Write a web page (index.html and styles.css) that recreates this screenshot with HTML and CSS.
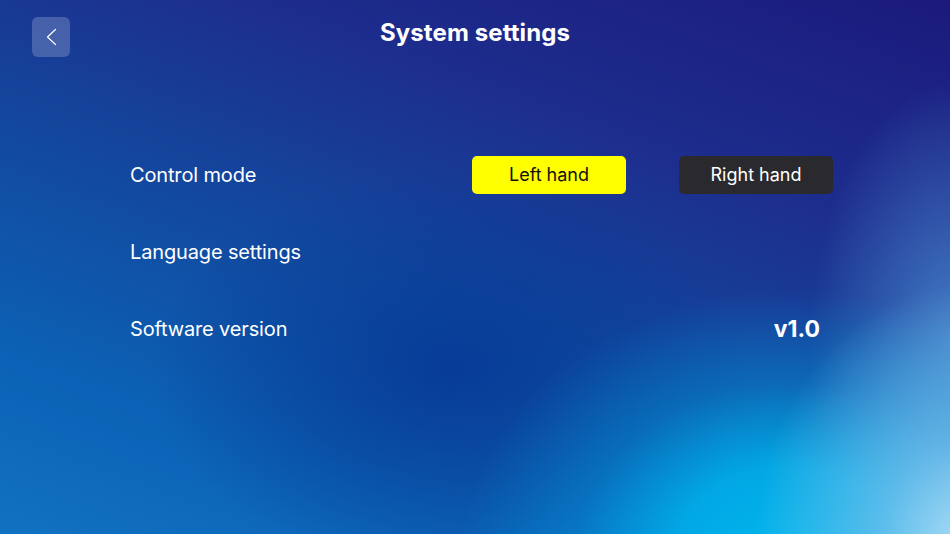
FILE: index.html
```html
<!DOCTYPE html>
<html>
<head>
<meta charset="utf-8">
<link rel="stylesheet" href="styles.css">
</head>
<body>
<div class="screen">
  <header class="topbar">
    <button class="back" aria-label="Back">
      <svg width="14" height="18" viewBox="0 0 14 18"><path d="M11.5 1.5 L3.5 9 L11.5 16.5" fill="none" stroke="#fff" stroke-width="1.2" stroke-linecap="round" stroke-linejoin="round"/></svg>
    </button>
    <h1 class="title">System settings</h1>
    <div class="spacer"></div>
  </header>
  <main class="list">
    <div class="row">
      <span class="label">Control mode</span>
      <div class="choices">
        <button class="choice active">Left hand</button>
        <button class="choice">Right hand</button>
      </div>
    </div>
    <div class="row">
      <span class="label">Language settings</span>
    </div>
    <div class="row">
      <span class="label">Software version</span>
      <span class="version">v1.0</span>
    </div>
  </main>
</div>
</body>
</html>
```
FILE: styles.css
```css
html, body {
  margin: 0;
  padding: 0;
}
body {
  width: 950px;
  height: 534px;
  overflow: hidden;
  font-family: Inter, "Noto Sans", "Liberation Sans", sans-serif;
  color: #fff;
}
.screen {
  width: 950px;
  height: 534px;
  box-sizing: border-box;
  background:
    radial-gradient(ellipse 210px 260px at 965px 545px, rgba(172,222,248,1) 0%, rgba(120,196,238,0.75) 40%, rgba(60,160,225,0) 100%),
    radial-gradient(ellipse 330px 270px at 790px 560px, rgba(0,184,238,1) 0%, rgba(0,176,234,0.9) 35%, rgba(0,160,225,0.4) 65%, rgba(0,150,220,0) 100%),
    radial-gradient(ellipse 150px 260px at 960px 340px, rgba(80,150,215,0.75) 0%, rgba(80,150,215,0) 100%),
    radial-gradient(ellipse 300px 200px at 450px 370px, rgba(6,58,150,0.9) 0%, rgba(6,58,150,0) 100%),
    linear-gradient(200deg, #1b1a7c 0%, #1d2e8e 30%, #124a9f 55%, #0b62b6 80%, #1272c2 100%);
  display: flex;
  flex-direction: column;
}
.topbar {
  display: grid;
  grid-template-columns: 38px 1fr 38px;
  align-items: center;
  padding: 17px 32px 0 32px;
}
.back {
  width: 38px;
  height: 40px;
  border: none;
  border-radius: 6px;
  background: rgba(255,255,255,0.2);
  display: flex;
  align-items: center;
  justify-content: center;
  padding: 0;
}
.title {
  margin: 0;
  text-align: center;
  font-size: 24px;
  font-weight: 700;
  letter-spacing: 0.1px;
  transform: translateY(-5px);
}
.list {
  display: flex;
  flex-direction: column;
  padding: 79px 117px 0 130px;
}
.row {
  height: 77px;
  display: flex;
  align-items: center;
  justify-content: space-between;
}
.label {
  font-size: 20px;
  font-weight: 400;
  letter-spacing: -0.15px;
}
.choices {
  display: flex;
  gap: 53px;
}
.choice {
  width: 154px;
  height: 38px;
  border: none;
  border-radius: 5px;
  background: #2a2a2e;
  color: #fff;
  font-family: inherit;
  font-size: 18px;
  padding: 0;
}
.choice.active {
  background: #ffff00;
  color: #111;
}
.version {
  font-size: 23px;
  font-weight: 700;
  margin-right: 13px;
}
```
